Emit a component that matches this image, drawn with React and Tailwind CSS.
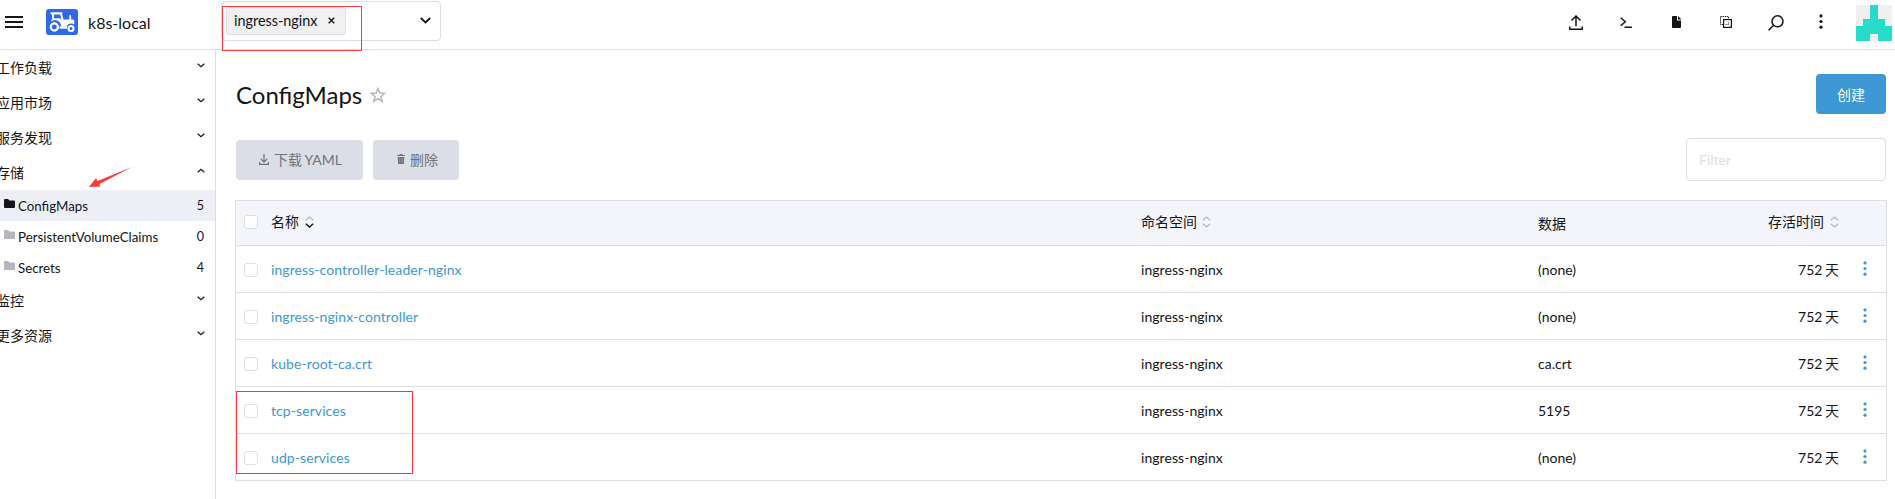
import React from "react";

const rows = [
  ["ingress-controller-leader-nginx", "(none)"],
  ["ingress-nginx-controller", "(none)"],
  ["kube-root-ca.crt", "ca.crt"],
  ["tcp-services", "5195"],
  ["udp-services", "(none)"],
];

function Chevron({ up = false }) {
  return (
    <svg className="mb-1 h-[5px] w-2 shrink-0" viewBox="0 0 8 5" fill="none" stroke="#141419" strokeWidth="1.2">
      <path d={up ? "M.7 4.2 4 1.3l3.3 2.9" : "M.7 .8 4 3.7 7.300 .8"} />
    </svg>
  );
}

function Group({ name, open = false }) {
  return (
    <div className="flex h-[35px] items-center justify-between pr-[10px]">
      <span className="-ml-1 leading-5">{name}</span>
      <Chevron up={open} />
    </div>
  );
}

function Item({ name, count, active = false }) {
  return (
    <div className={active ? "flex h-[31px] items-center bg-[#eeeff4] pl-1 pr-[11px]" : "flex h-[31px] items-center pl-1 pr-[11px]"}>
      <svg className="mb-1 h-[9px] w-[11px]" viewBox="0 0 11 9" fill={active ? "#141419" : "#b6b6c2"}>
        <path d="M0 1Q0 0 1 0h3l1.5 1.5H10q1 0 1 1V8q0 1-1 1H1Q0 9 0 8z" />
      </svg>
      <span className="ml-[3px] flex-1 pt-[2px] text-[13.3px]">{name}</span>
      <span className="pt-px text-[12.5px]">{count}</span>
    </div>
  );
}

function Checkbox() {
  return <span className="block h-[14px] w-[14px] rounded-[3px] border border-[#dcdee7] bg-white" />;
}

function Sort({ active = false }) {
  return (
    <svg className="h-3 w-[9px]" viewBox="0 0 9 12" fill="none" strokeWidth="1.2">
      <path d="M.8 4.3 4.5 1l3.7 3.3" stroke="#b6b6c2" />
      <path d="M.8 7.7 4.5 11l3.7-3.3" stroke={active ? "#141419" : "#b6b6c2"} strokeWidth={active ? 1.4 : 1.2} />
    </svg>
  );
}

function Logo() {
  return (
    <svg className="h-[26px] w-8" viewBox="0 0 32 26">
      <rect width="32" height="26" rx="3" fill="#2f68e8" />
      <g fill="none" stroke="#fff">
        <path d="M5.500 4.300h10" strokeWidth="2.200" strokeLinecap="round" />
        <path d="M7 4v6M14.800 4l1.800 7" strokeWidth="1.900" />
        <path d="M24.200 7v4" strokeWidth="1.800" strokeLinecap="round" />
        <circle cx="8.300" cy="18" r="3.600" strokeWidth="2.200" />
        <circle cx="25" cy="19.500" r="2.500" strokeWidth="2" />
      </g>
      <path d="M4.500 12.500q6-3.500 9.500 1L15.500 17.500h5.200q1-3 4.300-3 2 0 3.300 1V12q0-1.600-1.500-1.600H15.500L14 9.300H7z" fill="#fff" />
      <path d="M13.500 17.200h7.500v2.500h-7.500z" fill="#fff" />
    </svg>
  );
}

function Kebab({ className, fill }) {
  return (
    <svg className={className} viewBox="0 0 4 16" fill={fill}>
      <circle cx="2" cy="2" r="1.700" />
      <circle cx="2" cy="8" r="1.700" />
      <circle cx="2" cy="14" r="1.700" />
    </svg>
  );
}

function Header() {
  return (
    <header className="flex h-[50px] shrink-0 border-b border-[#dcdee7]">
      <div className="flex w-[221px] items-start pl-[5px]">
        <div className="mt-4 flex w-[18px] flex-col gap-[3px]">
          <span className="h-[2px] bg-[#141419]" />
          <span className="h-[2px] bg-[#141419]" />
          <span className="h-[2px] bg-[#141419]" />
        </div>
        <div className="ml-[23px] mt-[9px]"><Logo /></div>
        <span className="ml-[10px] mt-[13px] text-base leading-5">k8s-local</span>
      </div>
      <div className="relative mt-px flex h-10 w-[220px] items-start justify-between rounded border border-[#dcdee7] pl-1 pr-[9px]">
        <div className="mt-[5px] flex h-7 w-[120px] items-center rounded-[3px] border border-[#dcdee7] bg-[#f1f1f1] pl-[7px]">
          <span className="pt-px text-[14.400px]">ingress-nginx</span>
          <svg className="mb-0.5 ml-[11px] h-[7px] w-[7px]" viewBox="0 0 7 7" stroke="#141419" strokeWidth="1.300">
            <path d="m.7.7 5.600 5.600M6.300.7.7 6.300" />
          </svg>
        </div>
        <svg className="mt-[15px] h-[7px] w-[11px]" viewBox="0 0 11 7" fill="none" stroke="#141419" strokeWidth="1.800">
          <path d="m.8 1 4.700 4.500L10.200 1" />
        </svg>
        <span className="absolute left-0 top-1 h-[45px] w-[140px] border border-[#f53b3b]" />
      </div>
      <div className="flex flex-1 justify-end pr-[3px]">
        <svg className="mr-[37px] mt-[15px] h-4 w-[14px]" viewBox="0 0 14 16" fill="none" stroke="#141419" strokeWidth="1.500">
          <path d="M7 11V1M2.500 5.500 7 1l4.500 4.500M.8 11.500v2.700h12.400v-2.700" />
        </svg>
        <svg className="mr-10 mt-[17px] h-[11px] w-3" viewBox="0 0 12 11" fill="none" stroke="#141419" strokeWidth="1.500">
          <path d="m.7.8 4.600 4L.7 8.800M4.500 10.200H12" />
        </svg>
        <svg className="mr-[38px] mt-4 h-3 w-[10px]" viewBox="0 0 10 12" fill="#141419">
          <path d="M1 0h4v4.500h4V11q0 1-1 1H1q-1 0-1-1V1q0-1 1-1zM6 0l3.500 3.500H6z" />
        </svg>
        <svg className="mr-9 mt-4 h-3 w-3" viewBox="0 0 12 12" fill="none" stroke="#141419">
          <path d="M3 8.500H.5v-8h8V3" strokeDasharray="1.300 .8" />
          <rect x="3.600" y="3.600" width="7.800" height="7.800" strokeWidth="1.200" />
          <path d="M5.500 8.500h3v-3" strokeWidth=".8" strokeDasharray="1.200 .8" />
        </svg>
        <svg className="mr-[35px] mt-[15px] h-4 w-4" viewBox="0 0 16 16" fill="none" stroke="#141419" strokeWidth="1.500">
          <circle cx="9.500" cy="6.300" r="5.500" />
          <path d="m5.600 10.200-5 5" />
        </svg>
        <Kebab className="mr-[33px] mt-[14px] h-[15px] w-1" fill="#141419" />
        <svg className="mt-[5px] h-9 w-9" viewBox="0 0 36 36" shapeRendering="crispEdges">
          <path fill="#f0f0f0" d="M0 0h36v36H0z" />
          <path fill="#26dbc9" d="M14 0h8v14h7v7h7v15H22v-7h-8v7H0V21h7v-7h7z" />
        </svg>
      </div>
    </header>
  );
}

export default function App() {
  return (
    <div className="flex h-[499px] w-[1895px] flex-col overflow-hidden bg-white font-[Lato,'Noto_Sans_CJK_SC',sans-serif] text-sm text-[#141419]">
      <Header />
      <div className="flex flex-1">
        <nav className="relative w-[216px] shrink-0 border-r border-[#dcdee7]">
          <Group name="工作负载" />
          <Group name="应用市场" />
          <Group name="服务发现" />
          <Group name="存储" open />
          <Item name="ConfigMaps" count="5" active />
          <Item name="PersistentVolumeClaims" count="0" />
          <Item name="Secrets" count="4" />
          <Group name="监控" />
          <Group name="更多资源" />
          <svg className="absolute left-[89px] top-[117px] h-5 w-[43px]" viewBox="0 0 43 20" fill="#fb3b38">
            <path d="M0 20 7 11l1.500 3L43 0 10.500 17l1 2.500z" />
          </svg>
        </nav>
        <main className="flex-1 pl-[19px] pr-2">
          <div className="flex h-[64px] items-start justify-between pl-px pr-px pt-6">
            <div className="flex items-center">
              <h1 className="text-2xl leading-[42px]">ConfigMaps</h1>
              <svg className="ml-2 h-4 w-4" viewBox="0 0 16 16" fill="none" stroke="#b6b6c2" strokeWidth="1.500">
                <path d="m8 1.600 1.800 4.500 4.900.3-3.800 3.100 1.300 4.900L8 11.700l-4.200 2.700 1.300-4.900-3.800-3.100 4.900-.3z" />
              </svg>
            </div>
            <button className="h-10 w-[70px] rounded bg-[#3d98d3] pt-0.5 text-white">创建</button>
          </div>
          <div className="flex h-[86px] items-start pl-px pr-px pt-[26px]">
            <button className="flex h-10 w-[127px] items-center rounded bg-[#dcdee7] pl-[23px] text-[#717179]">
              <svg className="mb-0.5 mr-[5px] h-[11px] w-[10px]" viewBox="0 0 10 11" fill="none" stroke="#717179" strokeWidth="1.200">
                <path d="M5 0v8M1.800 5 5 8l3.200-3M.6 8v2.400h8.800V8" />
              </svg>
              <span className="[word-spacing:-1px]">下载 YAML</span>
            </button>
            <button className="ml-[10px] flex h-10 w-[86px] items-center rounded bg-[#dcdee7] pl-6 text-[#717179]">
              <svg className="mb-0.5 mr-[5px] h-[10px] w-2" viewBox="0 0 8 10" fill="none" stroke="#717179">
                <path d="M0 1.500h8M2.500.5h3" />
                <path d="M.7 3h6.600l-.4 7H1.100z" fill="#717179" stroke="none" />
                <path d="M2.800 4.200v4.500M5.200 4.200v4.500" stroke="#b4b5bd" strokeWidth=".6" />
              </svg>
              <span>删除</span>
            </button>
            <input placeholder="Filter" className="ml-auto mt-[-2px] h-[43px] w-[200px] rounded border border-[#dcdee7] px-3 outline-none placeholder:text-[#dcdee7]" />
          </div>
          <div className="relative w-[1652px] border border-[#dcdee7]">
            <div className="flex h-[45px] items-center border-b border-[#dcdee7] bg-[#f4f5fa] pb-0.5">
              <div className="w-[35px] pl-2"><Checkbox /></div>
              <div className="flex w-[870px] items-center gap-[6px]"><span>名称</span><Sort active /></div>
              <div className="flex w-[397px] items-center gap-[5px]"><span>命名空间</span><Sort /></div>
              <div className="w-[200px] pt-1">数据</div>
              <div className="flex w-[101px] items-center justify-end gap-[6px]"><span>存活时间</span><Sort /></div>
            </div>
            {rows.map(([name, data], i) => (
              <div key={name} className={i === 4 ? "flex h-[46px] items-center pt-[2px]" : "flex h-[47px] items-center border-b border-[#dcdee7] pt-[2px]"}>
                <div className="w-[35px] pl-2"><Checkbox /></div>
                <a className="w-[870px] tracking-[0.08px] text-[#3d98d3]">{name}</a>
                <span className="w-[397px] tracking-[0.05px]">ingress-nginx</span>
                <span className="w-[200px]">{data}</span>
                <span className="w-[101px] text-right [word-spacing:-1px]">752 天</span>
                <Kebab className="mb-1 ml-6 h-[15px] w-1" fill="#3d98d3" />
              </div>
            ))}
            <span className="absolute left-0 top-[190px] h-[83px] w-[177px] border border-[#f53b3b]" />
          </div>
        </main>
      </div>
    </div>
  );
}
